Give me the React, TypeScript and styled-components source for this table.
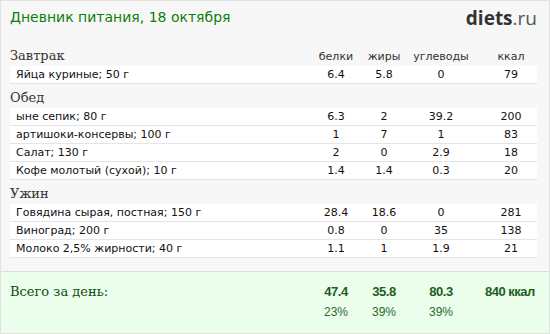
import React from "react";
import styled, { createGlobalStyle } from "styled-components";

const Global = createGlobalStyle`
  html, body { margin: 0; padding: 0; background: #f7f7f7; }
  * { box-sizing: border-box; }
`;

const Page = styled.div`
  width: 550px;
  height: 334px;
  border: 1px solid #e2e2e2;
  background: #f7f7f7;
  display: flex;
  flex-direction: column;
  overflow: hidden;
`;

const Header = styled.div`
  height: 41px;
  display: flex;
  justify-content: space-between;
  align-items: flex-start;
  padding: 6px 12px 0 9px;
`;

const Title = styled.h1`
  margin: 0;
  font-family: "DejaVu Sans", Verdana, sans-serif;
  font-weight: normal;
  font-size: 14px;
  line-height: 20px;
  color: #0b800b;
`;

const Logo = styled.div`
  font-family: "Open Sans", sans-serif;
  font-size: 19px;
  line-height: 22px;
  color: #333;
  b { font-weight: 700; }
  span { color: #555; font-weight: 400; }
`;

const Sections = styled.div`
  padding: 0 12px 0 9px;
  flex: 1;
`;

const Grid = styled.div`
  display: grid;
  grid-template-columns: 1fr 48px 48px 66px 11px 52px;
  align-items: center;
`;

const SectionHead = styled(Grid)`
  height: 24px;
`;

const SectionTitle = styled.div`
  font-family: "DejaVu Serif", Georgia, serif;
  font-size: 13px;
  color: #333;
  padding-top: 2px;
`;

const ColHead = styled.div<{ $col: number }>`
  grid-column: ${(p) => p.$col};
  text-align: center;
  font-family: "DejaVu Sans", Verdana, sans-serif;
  font-size: 11px;
  color: #333;
  padding-top: 4px;
`;

const Row = styled(Grid)`
  height: 18px;
  background: #fff;
  border-bottom: 1px solid #e4e4e4;
  font-family: "DejaVu Sans", Verdana, sans-serif;
  font-size: 11px;
  color: #111;
`;

const Name = styled.div`
  padding-left: 6px;
  white-space: nowrap;
  overflow: hidden;
`;

const Num = styled.div<{ $col: number }>`
  grid-column: ${(p) => p.$col};
  text-align: center;
`;

const Total = styled.div`
  margin-top: auto;
  height: 62px;
  border-top: 1px solid #dcdcdc;
  background: #ebfdeb;
  padding: 8px 12px 0 9px;
`;

const TotalGrid = styled(Grid)`
  grid-template-rows: 22px 20px;
  align-items: center;
`;

const TotalLabel = styled.div`
  font-family: "DejaVu Serif", Georgia, serif;
  font-size: 13px;
  color: #0f4f0f;
`;

const TotalNum = styled.div<{ $col: number; $right?: boolean }>`
  grid-column: ${(p) => p.$col};
  text-align: ${(p) => (p.$right ? "right" : "center")};
  padding-right: ${(p) => (p.$right ? "5px" : "0")};
  font-family: "Liberation Sans", Arial, sans-serif;
  font-weight: bold;
  font-size: 13px;
  color: #1e5e1e;
  white-space: nowrap;
  letter-spacing: -0.5px;
`;

const Pct = styled.div<{ $col: number }>`
  grid-column: ${(p) => p.$col};
  grid-row: 2;
  text-align: center;
  font-family: "Liberation Sans", Arial, sans-serif;
  font-size: 12px;
  color: #2c6a2c;
`;

type Item = [string, string, string, string, string];

const meals: { title: string; heads?: boolean; items: Item[] }[] = [
  {
    title: "Завтрак",
    heads: true,
    items: [["Яйца куриные; 50 г", "6.4", "5.8", "0", "79"]],
  },
  {
    title: "Обед",
    items: [
      ["ыне сепик; 80 г", "6.3", "2", "39.2", "200"],
      ["артишоки-консервы; 100 г", "1", "7", "1", "83"],
      ["Салат; 130 г", "2", "0", "2.9", "18"],
      ["Кофе молотый (сухой); 10 г", "1.4", "1.4", "0.3", "20"],
    ],
  },
  {
    title: "Ужин",
    items: [
      ["Говядина сырая, постная; 150 г", "28.4", "18.6", "0", "281"],
      ["Виноград; 200 г", "0.8", "0", "35", "138"],
      ["Молоко 2,5% жирности; 40 г", "1.1", "1", "1.9", "21"],
    ],
  },
];

const cols = [2, 3, 4, 6];

export default function App() {
  return (
    <>
      <Global />
      <Page>
        <Header>
          <Title>Дневник питания, 18 октября</Title>
          <Logo>
            <b>diets</b>
            <span>.ru</span>
          </Logo>
        </Header>
        <Sections>
          {meals.map((m) => (
            <div key={m.title}>
              <SectionHead>
                <SectionTitle>{m.title}</SectionTitle>
                {m.heads && (
                  <>
                    <ColHead $col={2}>белки</ColHead>
                    <ColHead $col={3}>жиры</ColHead>
                    <ColHead $col={4}>углеводы</ColHead>
                    <ColHead $col={6}>ккал</ColHead>
                  </>
                )}
              </SectionHead>
              {m.items.map((it) => (
                <Row key={it[0]}>
                  <Name>{it[0]}</Name>
                  {it.slice(1).map((v, i) => (
                    <Num key={i} $col={cols[i]}>
                      {v}
                    </Num>
                  ))}
                </Row>
              ))}
            </div>
          ))}
        </Sections>
        <Total>
          <TotalGrid>
            <TotalLabel>Всего за день:</TotalLabel>
            <TotalNum $col={2}>47.4</TotalNum>
            <TotalNum $col={3}>35.8</TotalNum>
            <TotalNum $col={4}>80.3</TotalNum>
            <TotalNum $col={6} $right>
              840 ккал
            </TotalNum>
            <Pct $col={2}>23%</Pct>
            <Pct $col={3}>39%</Pct>
            <Pct $col={4}>39%</Pct>
          </TotalGrid>
        </Total>
      </Page>
    </>
  );
}
